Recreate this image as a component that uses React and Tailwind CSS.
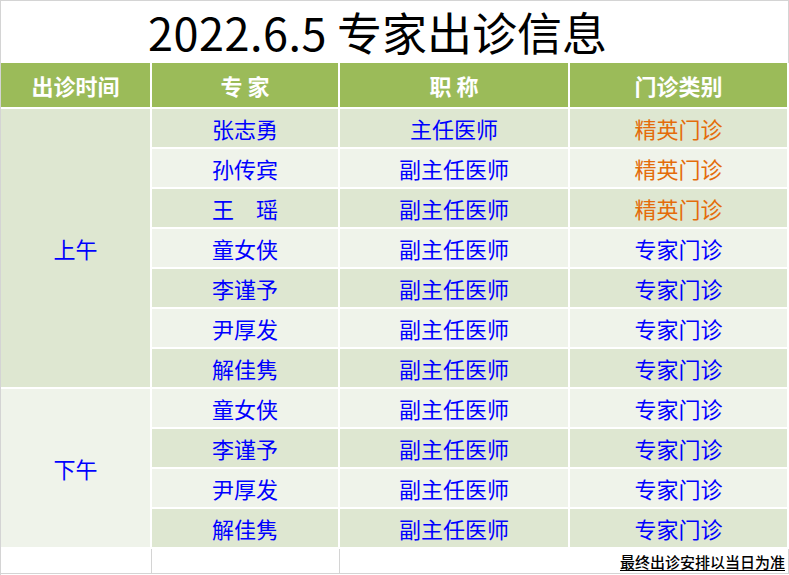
import React from "react";

const morning = [
  ["张志勇", "主任医师", "精英门诊"],
  ["孙传宾", "副主任医师", "精英门诊"],
  ["王　瑶", "副主任医师", "精英门诊"],
  ["童女侠", "副主任医师", "专家门诊"],
  ["李谨予", "副主任医师", "专家门诊"],
  ["尹厚发", "副主任医师", "专家门诊"],
  ["解佳隽", "副主任医师", "专家门诊"],
];
const afternoon = [
  ["童女侠", "副主任医师", "专家门诊"],
  ["李谨予", "副主任医师", "专家门诊"],
  ["尹厚发", "副主任医师", "专家门诊"],
  ["解佳隽", "副主任医师", "专家门诊"],
];

function Row({ r, i }) {
  const bg = i % 2 === 0 ? "bg-[#dee7d1]" : "bg-[#eff3ea]";
  const typeColor = r[2] === "精英门诊" ? "text-[#e46c0a]" : "text-[#0000ff]";
  return (
    <>
      <div className={`col-start-2 ${bg} flex items-center justify-center text-[#0000ff]`}>{r[0]}</div>
      <div className={`col-start-3 ${bg} flex items-center justify-center text-[#0000ff]`}>{r[1]}</div>
      <div className={`col-start-4 ${bg} flex items-center justify-center ${typeColor}`}>{r[2]}</div>
    </>
  );
}

export default function App() {
  return (
    <div className="w-[789px] h-[575px] bg-white overflow-hidden font-['Noto_Sans_CJK_SC','Noto_Sans',sans-serif]">
      <div className="border-l border-[#d4d4d4] h-[575px]">
        <div className="w-[788px] h-[63px] border-t border-r border-[#d4d4d4] flex items-center justify-center pr-[34px]">
          <span className="text-[45px] leading-none text-black -mt-[2px]">
            <span className="tracking-[0.5px]">2022.6.5</span> 专家出诊信息
          </span>
        </div>
        <div className="w-[787px] grid grid-cols-[149px_186px_228px_217px] grid-rows-[44px_repeat(11,38px)] gap-[2px] text-[22px] leading-none">
          <div className="bg-[#9bbb59] text-white font-bold flex items-center justify-center">出诊时间</div>
          <div className="bg-[#9bbb59] text-white font-bold flex items-center justify-center whitespace-pre">专 家</div>
          <div className="bg-[#9bbb59] text-white font-bold flex items-center justify-center whitespace-pre">职 称</div>
          <div className="bg-[#9bbb59] text-white font-bold flex items-center justify-center">门诊类别</div>
          <div className="col-start-1 row-start-2 row-span-7 bg-[#dee7d1] flex items-center justify-center text-[#0000ff]">上午</div>
          {morning.map((r, i) => (
            <Row key={"m" + i} r={r} i={i} />
          ))}
          <div className="col-start-1 row-start-9 row-span-4 bg-[#eff3ea] flex items-center justify-center text-[#0000ff]">下午</div>
          {afternoon.map((r, i) => (
            <Row key={"a" + i} r={r} i={i + 1} />
          ))}
        </div>
        <div className="mt-[2px] w-[788px] h-[25px] border-r border-b border-[#d4d4d4] flex">
          <div className="w-[151px] h-full border-r border-[#d4d4d4]"></div>
          <div className="w-[188px] h-full border-r border-[#d4d4d4]"></div>
          <div className="flex-1 h-full flex items-center justify-end pr-[3px]">
            <span className="text-[15px] leading-none text-black font-medium underline underline-offset-2">最终出诊安排以当日为准</span>
          </div>
        </div>
      </div>
    </div>
  );
}
